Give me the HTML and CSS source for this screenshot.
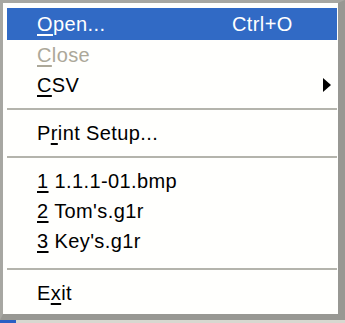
FILE: index.html
```html
<!DOCTYPE html>
<html lang="en">
<head>
  <meta charset="UTF-8" />
  <title>File menu</title>
  <link rel="stylesheet" href="styles.css">
</head>
<body>
  <div class="menu">
    <div class="item active"><span class="label"><u>O</u>pen...</span><span class="key">Ctrl+O</span></div>
    <div class="item disabled"><span class="label"><u>C</u>lose</span></div>
    <div class="item"><span class="label"><u>C</u>SV</span><span class="arrow"></span></div>
    <div class="sep"></div>
    <div class="item"><span class="label">P<u>r</u>int Setup...</span></div>
    <div class="sep"></div>
    <div class="item"><span class="label"><u>1</u> 1.1.1-01.bmp</span></div>
    <div class="item"><span class="label"><u>2</u> Tom's.g1r</span></div>
    <div class="item"><span class="label"><u>3</u> Key's.g1r</span></div>
    <div class="sep last"></div>
    <div class="item"><span class="label">E<u>x</u>it</span></div>
  </div>
  <div class="taskbar"><span class="start"></span></div>
</body>
</html>
```

FILE: styles.css
```css
body {
  margin: 0;
  background: #ece9d8;
  font-family: "Liberation Sans", Arial, sans-serif;
}
.menu {
  width: 345px;
  height: 320px;
  box-sizing: border-box;
  background: #fffffd;
  border-left: 3px solid #a7a7a2;
  border-top: 3px solid #a7a7a2;
  border-right: 7px solid #989893;
  border-bottom: 6px solid #989893;
  padding: 5px 1px 0 4px;
}
.item {
  display: flex;
  align-items: center;
  height: 30px;
  padding: 0 5px 0 30px;
  font-size: 20px;
  letter-spacing: 0.4px;
  color: #000;
}
.item u {
  text-underline-offset: 3px;
}
.label {
  flex: 1;
}
.active {
  height: 32px;
  background: #316ac5;
  color: #fff;
}
.disabled {
  color: #aca899;
}
.key {
  width: 100px;
}
.arrow {
  width: 0;
  height: 0;
  border-top: 7px solid transparent;
  border-bottom: 7px solid transparent;
  border-left: 8px solid #000;
  margin-right: 1px;
}
.sep {
  height: 2px;
  margin: 8px 0;
  background: #b4b4ac;
}
.sep.last {
  margin-top: 12px;
}
.taskbar {
  height: 3px;
  background: #d8d8d0;
}
.start {
  display: block;
  width: 16px;
  height: 3px;
  background: #2a5fc4;
}
```
